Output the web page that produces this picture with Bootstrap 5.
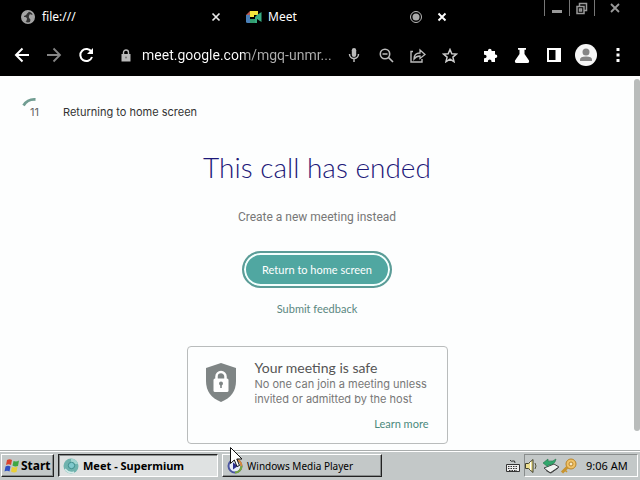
<!DOCTYPE html>
<html lang="en">
<head>
<meta charset="utf-8">
<meta name="viewport" content="width=device-width, initial-scale=1">
<title>Meet - Supermium</title>
<link href="https://cdn.jsdelivr.net/npm/bootstrap@5.3.0/dist/css/bootstrap.min.css" rel="stylesheet">
<style>
  body { font-family: Roboto, "Liberation Sans", sans-serif; background: #fdfefe; }
  svg { display: block; flex: none; }
  .chrome { background: #000; color: #fff; }
  .tabstrip { height: 34px; }
  .tab { width: 218px; height: 34px; padding: 0 1px 0 12px; gap: 6px; font: 12px/16px "Noto Sans", sans-serif; }
  .tab a { color: #fff; text-decoration: none; }
  .plain { background: none; border: 0; padding: 0; color: inherit; display: flex; align-items: center; justify-content: center; flex: none; }
  .tab .plain { width: 18px; height: 18px; }
  .winctl { height: 16px; color: #8d8d8d; }
  .winctl .plain { width: 25px; height: 16px; border-left: 1px solid #777; }
  .winctl .plain:last-child { width: 46px; padding-right: 6px; }
  .toolbar { height: 42px; padding: 0 6px; }
  .toolbar .plain { width: 32px; height: 32px; }
  .address { padding: 0 8px; color: #c4c4c4; }
  .url { background: linear-gradient(90deg, #fff 103px, #b0b0b0 103px); -webkit-background-clip: text; background-clip: text; color: transparent; border: 0; padding: 0; width: 40px; font: 14px/24px Roboto, sans-serif; outline: 0; }
  .countdown { padding: 20px 0 0 22px; height: 48px; font: 11px/16px Inter, sans-serif; color: #333; }
  .ring { width: 41px; height: 24px; display: grid; }
  .ring > * { grid-area: 1 / 1; }
  .ring span { padding: 8px 0 0 8px; color: #666; }
  .returning { padding-top: 8px; }
  .headline { font: 300 28px/36px Lato, sans-serif; color: #1d1979; margin: 25px 0 0; }
  .instead { font: 12px/16px Roboto, sans-serif; color: #777; margin: 24px 0 0; }
  .home-btn { width: 150px; height: 37px; border-radius: 19px; border: 2px solid #5b9c97; background: #50a7a1; box-shadow: inset 0 0 0 2px #f3fffd; color: #fff; font: 11px/16px Lato, sans-serif; margin-top: 26px; padding: 0; }
  .teal { color: #4b8a7d; text-decoration: none; font: 11px/16px Lato, sans-serif; }
  .feedback { margin-top: 13px; color: #5b8780; }
  .safe { width: 261px; margin-top: 29px; padding: 12px 18px 11px 17px; border: 1px solid #b9bcbc; border-radius: 4px; }
  .safe-copy { padding-left: 18px; }
  .safe h2 { font: 14px/18px Lato, sans-serif; color: #555; margin: 0; }
  .safe p { font: 11px/15px Inter, sans-serif; color: #777; margin: 0 0 9px; }
  .scroller { width: 6px; padding: 3px 0 19px; }
  .thumb { background: #b9bcbb; border-radius: 3px; }
  .taskbar { height: 30px; background: #c3c8c8; border-top: 1px solid #a9adad; box-shadow: inset 0 1px #fff; padding: 3px 2px 3px 1px; color: #000; }
  .task { height: 23px; background: #c3c8c8; border: 1px solid; border-color: #fff #222 #222 #fff; box-shadow: inset -1px -1px #898d8d; padding: 0 4px; display: flex; align-items: center; color: #000; font: 10px/16px "Noto Sans", sans-serif; text-align: left; }
  .task.start { width: 53px; padding: 0 2px; font-weight: 700; font-size: 12px; }
  .task.open { width: 160px; background: #dfe2e2; border-color: #222 #fff #fff #222; box-shadow: inset 1px 1px #898d8d; font-weight: 700; font-size: 11px; }
  .task.media { width: 160px; }
  .tray { height: 23px; border: 1px solid; border-color: #898d8d #fff #fff #898d8d; width: 114px; }
  .tray time { font: 11px/16px "Noto Sans", sans-serif; margin-left: 8px; }
  .cursor { left: 229px; bottom: 12px; z-index: 5; }
</style>
<script src="https://cdn.jsdelivr.net/npm/bootstrap@5.3.0/dist/js/bootstrap.bundle.min.js" defer></script>
</head>
<body class="min-vh-100 d-flex flex-column position-relative overflow-hidden">
<header class="chrome">
  <div class="tabstrip d-flex">
    <nav class="d-flex ps-2" aria-label="Tabs">
      <div class="tab d-flex align-items-center">
        <svg width="16" height="16" viewBox="0 0 16 16"><circle cx="8" cy="8" r="6.2" fill="#333" stroke="#a5a5a5" stroke-width="1.6"/><path d="M2 6c2-3 5-4.500 7-4-.5 2-2 2-2.500 3.500C5.500 7 4 6 4 8c2 0 3 .5 3 2l-1 3C3 12 1.500 9 2 6zm8-1c1 1 2 1 4 0 .8 3-.5 7-4 8.500 0-2 1-2.500 0-3.500S8 8 10 5z" fill="#a5a5a5"/></svg>
        <a href="#file" class="flex-grow-1">file:///</a>
        <button class="plain" aria-label="Close file tab"><svg width="10" height="10" viewBox="0 0 10 10"><path d="M1.500 1.500l7 7m0-7l-7 7" stroke="#e8e8e8" stroke-width="1.700"/></svg></button>
      </div>
      <div class="tab d-flex align-items-center ms-2">
        <svg width="16" height="16" viewBox="0 0 16 16"><path d="M4 2h8v4H8v2H4z" fill="#f2e53b"/><path d="M0 6l4-4v4z" fill="#b85b50"/><path d="M0 6h4v8H1.500Q0 14 0 12.500z" fill="#4a80b8"/><path d="M4 10h7v4H4z" fill="#329d70"/><path d="M11 6l4.500-3v10L11 10v4H9V8z" fill="#38ad82"/></svg>
        <a href="#meet" class="flex-grow-1">Meet</a>
        <svg width="14" height="14" viewBox="0 0 14 14"><circle cx="7" cy="7" r="5.500" fill="none" stroke="#bbb"/><circle cx="7" cy="7" r="3.500" fill="#aaa"/></svg>
        <button class="plain ms-1" aria-label="Close Meet tab"><svg width="10" height="10" viewBox="0 0 10 10"><path d="M1.500 1.500l7 7m0-7l-7 7" stroke="#fff" stroke-width="1.900"/></svg></button>
      </div>
    </nav>
    <div class="winctl d-flex ms-auto">
      <button class="plain" aria-label="Minimize"><svg width="10" height="14" viewBox="0 0 10 14"><path d="M0 9h10v3H0z" fill="#999"/></svg></button>
      <button class="plain" aria-label="Restore"><svg width="12" height="13" viewBox="0 0 12 13"><path d="M3.500 4V1.500h7v7H8M1 4.500h7v7H1zM3.500 7h2v2h-2z" fill="none" stroke="#999" stroke-width="1.500"/></svg></button>
      <button class="plain" aria-label="Close window"><svg width="10" height="10" viewBox="0 0 10 10"><path d="M1 1l8 8m0-8L1 9" stroke="#999" stroke-width="1.800"/></svg></button>
    </div>
  </div>
  <div class="toolbar d-flex align-items-center">
    <button class="plain" aria-label="Back"><svg width="16" height="16" viewBox="0 0 16 16"><path d="M15 8H2m6.500-6.500L2 8l6.500 6.500" fill="none" stroke="#fff" stroke-width="2"/></svg></button>
    <button class="plain" aria-label="Forward"><svg width="16" height="16" viewBox="0 0 16 16"><path d="M1 8h13M7.500 1.500L14 8l-6.500 6.500" fill="none" stroke="#858585" stroke-width="1.800"/></svg></button>
    <button class="plain" aria-label="Reload"><svg width="16" height="16" viewBox="0 0 16 16"><path d="M13.500 5A6 6 0 1 0 14 10" fill="none" stroke="#fff" stroke-width="2"/><path d="M15 1v6H9z" fill="#fff"/></svg></button>
    <form class="address d-flex align-items-center flex-grow-1" onsubmit="return false">
      <button type="button" class="plain" aria-label="Site information"><svg width="10" height="13" viewBox="0 0 10 13"><path d="M2.500 5V3.500a2.500 2.500 0 0 1 5 0V5" fill="none" stroke="#bbb" stroke-width="1.400"/><path d="M.5 5h9v7.500h-9z" fill="#bbb"/><circle cx="5" cy="8.500" r="1" fill="#777"/></svg></button>
      <input class="url flex-grow-1" type="text" aria-label="Address" value="meet.google.com/mgq-unmr...">
      <button type="button" class="plain" aria-label="Microphone"><svg width="12" height="14" viewBox="0 0 12 14"><rect x="3.800" y="0" width="4.400" height="9" rx="2.200" fill="#bbb"/><path d="M1.500 6a4.500 4.500 0 0 0 9 0M6 10.500V14" fill="none" stroke="#bbb" stroke-width="1.500"/></svg></button>
      <button type="button" class="plain" aria-label="Zoom"><svg width="15" height="15" viewBox="0 0 15 15"><circle cx="6" cy="6" r="4.700" fill="none" stroke="#bbb" stroke-width="1.600"/><path d="M3.500 6h5M9.500 9.500L14 14" stroke="#bbb" stroke-width="1.700"/></svg></button>
      <button type="button" class="plain" aria-label="Share"><svg width="16" height="15" viewBox="0 0 16 15"><path d="M3 3.500H1v10.500h11V11" fill="none" stroke="#bbb" stroke-width="1.400"/><path d="M4 11c0-4 2-6 6-6V2l5 4.500-5 4V8c-3 0-4.500 1-6 3z" fill="none" stroke="#bbb" stroke-width="1.300"/></svg></button>
      <button type="button" class="plain" aria-label="Bookmark"><svg width="16" height="15" viewBox="0 0 16 15"><path d="M8 1.500l1.800 4.200 4.700.4-3.600 3 1.100 4.600L8 11.200l-4 2.500 1.100-4.600-3.600-3 4.700-.4z" fill="none" stroke="#ccc" stroke-width="1.500"/></svg></button>
    </form>
    <button class="plain" aria-label="Extensions"><svg width="15" height="15" viewBox="0 0 15 15"><path d="M1 3h4V2.500a1.800 1.800 0 0 1 3.600 0V3H12v3.500h.5a1.800 1.800 0 0 1 0 3.600H12V14H8.500v-.8a1.800 1.800 0 0 0-3.600 0v.8H1v-3.700h.8a1.800 1.800 0 0 0 0-3.600H1z" fill="#fff"/></svg></button>
    <button class="plain" aria-label="Labs"><svg width="16" height="15" viewBox="0 0 16 15"><path d="M4 0h8v1.800h-1.500V6L15 12.500Q15.500 15 13.500 15h-11Q.5 15 1 12.500L5.500 6V1.800H4z" fill="#fff"/></svg></button>
    <button class="plain" aria-label="Side panel"><svg width="14" height="14" viewBox="0 0 14 14"><path d="M0 0h14v14H0zM2 2v10h6.500V2z" fill="#fff" fill-rule="evenodd"/></svg></button>
    <button class="plain" aria-label="Profile"><svg width="22" height="22" viewBox="0 0 22 22"><circle cx="11" cy="11" r="11" fill="#f6f6f6"/><circle cx="11" cy="8" r="3.500" fill="#858585"/><path d="M5 17v-1.500Q5 12.500 11 12.500t6 3V17z" fill="#858585"/></svg></button>
    <button class="plain" aria-label="Menu"><svg width="4" height="14" viewBox="0 0 4 14"><path d="M.5 0h3v3h-3zm0 5.500h3v3h-3zm0 5.500h3v3h-3z" fill="#fff"/></svg></button>
  </div>
</header>

<div class="d-flex flex-grow-1">
  <main class="flex-grow-1 d-flex flex-column align-items-center">
    <div class="countdown d-flex align-self-stretch">
      <div class="ring"><svg width="20" height="20" viewBox="0 0 20 20"><path d="M1.500 9.500A13 13 0 0 1 13.500 3.500" fill="none" stroke="#719d92" stroke-width="2.800"/></svg><span>11</span></div>
      <div class="returning">Returning to home screen</div>
    </div>
    <h1 class="headline">This call has ended</h1>
    <p class="instead">Create a new meeting instead</p>
    <button class="home-btn">Return to home screen</button>
    <a class="teal feedback" href="#feedback">Submit feedback</a>
    <section class="safe d-flex">
      <svg class="mt-1" width="32" height="40" viewBox="0 0 32 40"><path d="M16 0l15 5v13c0 10-5 17-15 21C6 35 1 28 1 18V5z" fill="#7f8585"/><path d="M11.500 17v-3.500a4.500 4.500 0 0 1 9 0V17" fill="none" stroke="#fff" stroke-width="2.500"/><rect x="8.500" y="15.500" width="15" height="13.500" rx="1.500" fill="#fff"/><circle cx="16" cy="20.500" r="2" fill="#7f8585"/><path d="M15.200 21h1.600v4h-1.600z" fill="#7f8585"/></svg>
      <div class="safe-copy flex-grow-1">
        <h2>Your meeting is safe</h2>
        <p>No one can join a meeting unless invited or admitted by the host</p>
        <a class="teal d-block text-end" href="#learn">Learn more</a>
      </div>
    </section>
  </main>
  <div class="scroller d-flex" aria-hidden="true"><div class="thumb flex-grow-1"></div></div>
</div>

<footer class="taskbar d-flex align-items-center">
  <button class="task start"><svg width="17" height="16" viewBox="0 0 17 16"><path d="M3 2q2.500-1.500 5 0L7 7Q4.500 5.500 2 7z" fill="#d8432f"/><path d="M9.500 3q3 1 5.500-.5L14 8q-3 1-5.500-.5z" fill="#3fa644"/><path d="M1.500 8.500Q4 7 6.500 8.500l-1 5Q3 12 .5 13.500z" fill="#2c4fc4"/><path d="M8 9q3 1 5.500-.5l-1 5.500q-3 1-5.500-.5z" fill="#e9cf36"/></svg><span>Start</span></button>
  <button class="task open ms-1"><svg class="me-1" width="16" height="16" viewBox="0 0 16 16"><circle cx="8" cy="8" r="7.500" fill="#6fb3ae"/><path d="M8 .5A7.500 7.500 0 0 1 15 6H8z" fill="#a4d5d0"/><circle cx="8.500" cy="7.500" r="3.200" fill="#7fc9cd" stroke="#3f8d8c"/><path d="M2 11q4 5 9 3" stroke="#d3ebe8" stroke-width="1.500" fill="none"/></svg><span>Meet - Supermium</span></button>
  <button class="task media ms-1"><svg class="me-1" width="16" height="16" viewBox="0 0 16 16"><circle cx="8" cy="8" r="6.500" fill="#e8edf8" stroke="#4b55a0" stroke-width="2"/><path d="M8 1.500A6.500 6.500 0 0 1 14.500 8" stroke="#d98a38" stroke-width="2" fill="none"/><path d="M14.500 8A6.500 6.500 0 0 1 8 14.500" stroke="#79a83b" stroke-width="2" fill="none"/><path d="M6 4.500l5 3.500-5 3.500z" fill="#2a2d8c"/></svg><span>Windows Media Player</span></button>
  <svg class="ms-auto me-1" width="14" height="14" viewBox="0 0 14 14"><path d="M4 1q1 2 3 1t2 2" stroke="#333" fill="none"/><path d="M.5 5.500h13v7H.5z" fill="#eee" stroke="#333"/><path d="M2 7.500h10M2 9.500h10M3 11.500h8" stroke="#333" stroke-dasharray="1.500 1"/></svg>
  <div class="tray d-flex align-items-center">
    <svg width="13" height="16" viewBox="0 0 13 16"><path d="M.5 5.500h3L8 1.500v13L3.500 10.500h-3z" fill="#ecdf91" stroke="#42412c"/><path d="M5.500 4v8" stroke="#fff"/><path d="M10 5q2 3 0 6" stroke="#55553a" fill="none"/></svg>
    <svg class="ms-1" width="18" height="16" viewBox="0 0 18 16"><path d="M2 10l10-4 5 3-9 6z" fill="#f0f2f0" stroke="#444"/><path d="M4 12.500l5 2.500 7-5" stroke="#444" fill="none"/><path d="M1 5l5-4v2q5 1 8-2-1 6-8 6v2z" fill="#31a76c" stroke="#23744a" stroke-width=".6"/></svg>
    <svg width="18" height="16" viewBox="0 0 18 16"><circle cx="11" cy="6" r="5" fill="#f0c268" stroke="#b98427"/><circle cx="11" cy="6" r="2" fill="#f8e9c5" stroke="#b98427"/><path d="M7.500 9L2 14.500" stroke="#c8942f" stroke-width="3"/><path d="M4 11l3 3" stroke="#c8942f" stroke-width="1.500"/></svg>
    <time>9:06 AM</time>
  </div>
</footer>
<svg class="cursor position-absolute" width="14" height="22" viewBox="0 0 14 22" aria-hidden="true"><path d="M1.500 1.500v16l3.800-3.500 2.700 6.500 2.500-1L7.800 13H13z" fill="#fff" stroke="#111"/></svg>
</body>
</html>
